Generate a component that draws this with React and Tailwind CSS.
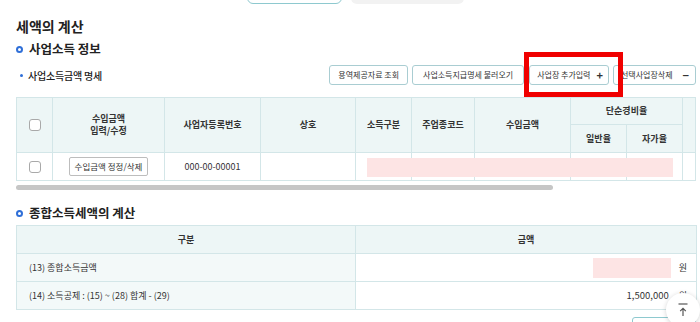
import React from "react";

const font = "font-['Noto_Sans_CJK_KR','Noto_Sans',sans-serif]";

const Ring = () => (
  <span className="inline-block w-[7px] h-[7px] rounded-full border-[2px] border-[#2f6fd8] mr-[6px] shrink-0" />
);

const Checkbox = () => (
  <span className="inline-block w-[12px] h-[12px] rounded-[3px] border border-[#a9a9a9] bg-white" />
);

const TopButton = ({ children, className = "px-[7px]" }) => (
  <button className={`h-[20px] border border-[#a9cdd2] rounded-[3px] bg-white text-[8px] text-[#333] flex items-center whitespace-nowrap ${className}`}>
    {children}
  </button>
);

const th = "border border-[#d3e6e8] bg-[#edf6f6] text-[9px] font-bold text-[#333] text-center";
const td = "border border-[#d3e6e8] bg-white text-[9px] text-[#333] text-center";

export default function App() {
  return (
    <div className={`${font} relative w-[700px] h-[322px] overflow-hidden bg-white text-[#222]`}>
      {/* top tabs, mostly scrolled off */}
      <div className="flex h-[4px] pl-[247px] gap-[9px]">
        <div className="-mt-[26px] w-[95px] h-[30px] border border-[#8ec9cf] rounded-b-[6px] bg-white" />
        <div className="-mt-[26px] w-[113px] h-[30px] rounded-b-[6px] bg-[#f2f2f2]" />
      </div>

      <div className="pl-[16px] pr-[4px]">
        <h2 className="mt-[12px] text-[14px] leading-[20px] font-bold">세액의 계산</h2>

        <div className="mt-[4px] flex items-center h-[18px]">
          <Ring />
          <span className="text-[12.5px] font-bold">사업소득 정보</span>
        </div>

        <div className="mt-[7px] flex items-center justify-between h-[20px]">
          <div className="flex items-center pl-[4px]">
            <span className="inline-block w-[3px] h-[3px] rounded-full bg-[#2f6fd8] mr-[5px]" />
            <span className="text-[10px] tracking-[-0.2px] font-medium">사업소득금액 명세</span>
          </div>
          <div className="flex items-center gap-[4px]">
            <TopButton className="px-[8px]">용역제공자료 조회</TopButton>
            <TopButton className="px-[10px]">사업소득지급명세 불러오기</TopButton>
            <div className="relative ml-[1px]">
              <TopButton className="pl-[7px] pr-[5px] gap-[6px]">
                사업장 추가입력 <span className="text-[11px] font-bold leading-none">+</span>
              </TopButton>
              <div className="absolute -left-[5px] -top-[13px] w-[99px] h-[45px] border-[5px] border-[#f00000]" />
            </div>
            <TopButton className="pl-[7px] pr-[6px] gap-[10px]">
              선택사업장삭제 <span className="text-[11px] font-bold leading-none">−</span>
            </TopButton>
          </div>
        </div>

        {/* business income table */}
        <div className="relative mt-[12px] w-[679px]">
          <table className="w-[679px] table-fixed border-collapse">
            <colgroup>
              <col className="w-[36px]" />
              <col className="w-[112px]" />
              <col className="w-[96px]" />
              <col className="w-[95px]" />
              <col className="w-[56px]" />
              <col className="w-[63px]" />
              <col className="w-[96px]" />
              <col className="w-[56px]" />
              <col className="w-[56px]" />
              <col className="w-[13px]" />
            </colgroup>
            <thead>
              <tr className="h-[27px]">
                <th rowSpan={2} className={th}>
                  <div className="flex justify-center"><Checkbox /></div>
                </th>
                <th rowSpan={2} className={`${th} leading-[12px]`}>
                  수입금액
                  <br />
                  입력/수정
                </th>
                <th rowSpan={2} className={th}>사업자등록번호</th>
                <th rowSpan={2} className={th}>상호</th>
                <th rowSpan={2} className={th}>소득구분</th>
                <th rowSpan={2} className={th}>주업종코드</th>
                <th rowSpan={2} className={th}>수입금액</th>
                <th colSpan={2} className={th}>단순경비율</th>
                <th rowSpan={2} className={th}></th>
              </tr>
              <tr className="h-[28px]">
                <th className={th}>일반율</th>
                <th className={th}>자가율</th>
              </tr>
            </thead>
            <tbody>
              <tr className="h-[28px]">
                <td className={td}>
                  <div className="flex justify-center"><Checkbox /></div>
                </td>
                <td className={td}>
                  <button className="h-[19px] px-[5px] border border-[#bdbdbd] rounded-[2px] bg-white text-[8.5px] text-[#333]">
                    수입금액 정정/삭제
                  </button>
                </td>
                <td className={td}>000-00-00001</td>
                <td className={td}></td>
                <td className={td}></td>
                <td className={td}></td>
                <td className={td}></td>
                <td className={td}></td>
                <td className={td}></td>
                <td className={td}></td>
              </tr>
            </tbody>
          </table>
          <div className="absolute left-[351px] top-[61px] w-[306px] h-[19px] bg-[#fde4e4]" />
        </div>
        <div className="mt-[4px] w-[537px] h-[5px] rounded-full bg-[#c6c6c6]" />

        {/* comprehensive income tax */}
        <div className="mt-[14px] flex items-center h-[18px]">
          <Ring />
          <span className="text-[12.5px] font-bold">종합소득세액의 계산</span>
        </div>

        <table className="mt-[3px] w-[680px] table-fixed border-collapse">
          <colgroup>
            <col className="w-[339px]" />
            <col className="w-[341px]" />
          </colgroup>
          <thead>
            <tr className="h-[28px]">
              <th className={th}>구분</th>
              <th className={th}>금액</th>
            </tr>
          </thead>
          <tbody className="text-[9px] text-[#333]">
            <tr className="h-[28px]">
              <td className="border border-[#d3e6e8] bg-[#f3f9f9] pl-[12px]">(13) 종합소득금액</td>
              <td className="border border-[#d3e6e8] bg-white">
                <div className="flex items-center justify-end pr-[9px]">
                  <span className="w-[78px] h-[20px] bg-[#fde4e4]" />
                  <span className="ml-[8px]">원</span>
                </div>
              </td>
            </tr>
            <tr className="h-[28px]">
              <td className="border border-[#d3e6e8] bg-[#f3f9f9] pl-[12px]">(14) 소득공제 : (15) ~ (28) 합계 - (29)</td>
              <td className="border border-[#d3e6e8] bg-white">
                <div className="flex items-center justify-end pr-[9px]">
                  <span className="text-[9.5px]">1,500,000</span>
                  <span className="ml-[10px]">원</span>
                </div>
              </td>
            </tr>
          </tbody>
        </table>

        <div className="mt-[7px] flex items-start justify-between h-[14px]">
          <div className="flex items-center pl-[12px] pt-[6px]">
            <span className="text-[10px] font-bold text-[#444]">세액공제 감면세액</span>
          </div>
          <button className="h-[20px] w-[64px] border border-[#8ec9cf] rounded-[3px] bg-white text-[8.5px] text-[#333]">
            이전금액 조회
          </button>
        </div>
      </div>

      {/* scroll to top */}
      <button className="absolute left-[666px] top-[293px] w-[34px] h-[34px] rounded-full bg-white shadow-[0_1px_5px_rgba(0,0,0,0.18)] flex items-center justify-center">
        <svg width="12" height="14" viewBox="0 0 12 14" fill="none" stroke="#555" strokeWidth="1.2">
          <path d="M1.5 1h9" />
          <path d="M6 13V5.5M3.2 8.2L6 5.4l2.8 2.8" />
        </svg>
      </button>
    </div>
  );
}
